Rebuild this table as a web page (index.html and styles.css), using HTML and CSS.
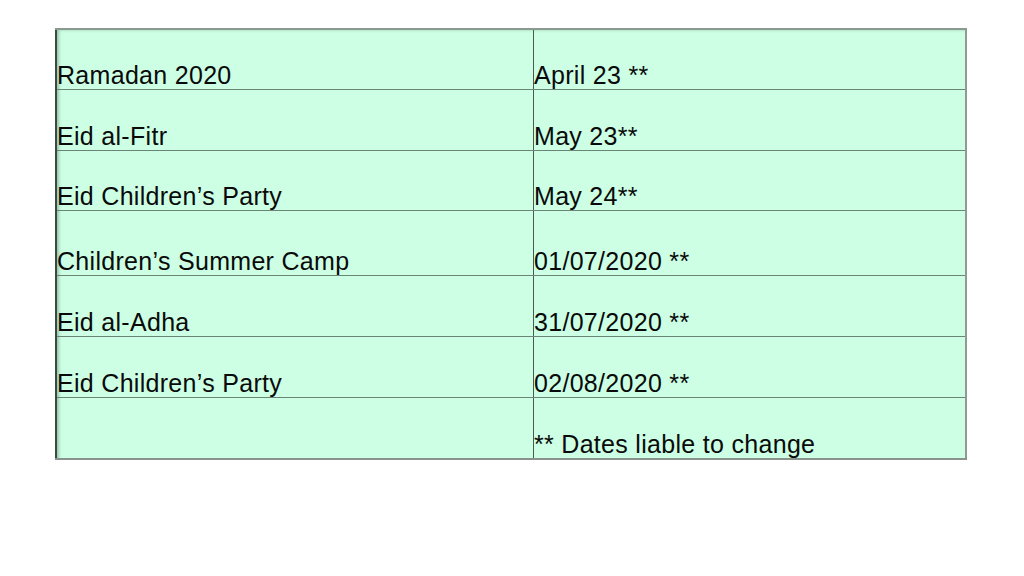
FILE: index.html
```html
<!DOCTYPE html>
<html>
<head>
<meta charset="utf-8">
<link rel="stylesheet" href="styles.css">
</head>
<body>
<div class="slide">
  <table class="events">
    <tr class="r60"><td class="c1">Ramadan 2020</td><td>April 23 **</td></tr>
    <tr class="r61"><td class="c1">Eid al-Fitr</td><td>May 23**</td></tr>
    <tr class="r60"><td class="c1">Eid Children’s Party</td><td>May 24**</td></tr>
    <tr class="r65"><td class="c1">Children’s Summer Camp</td><td>01/07/2020 **</td></tr>
    <tr class="r61"><td class="c1">Eid al-Adha</td><td>31/07/2020 **</td></tr>
    <tr class="r61"><td class="c1">Eid Children’s Party</td><td>02/08/2020 **</td></tr>
    <tr class="r61"><td class="c1"></td><td>** Dates liable to change</td></tr>
  </table>
</div>
</body>
</html>
```
FILE: styles.css
```css
html, body {
  margin: 0;
  padding: 0;
  background: #ffffff;
}
.slide {
  width: 1024px;
  height: 576px;
  padding: 28px 0 0 55px;
  box-sizing: border-box;
}
.events {
  border-collapse: collapse;
  width: 912px;
  background: #ccffe4;
  font-family: "Liberation Sans", Arial, sans-serif;
  font-size: 25px;
  letter-spacing: 0.3px;
  color: #0a0a0a;
  border-top: 2px solid #8a9a90;
  border-right: 2px solid #8f9a94;
  border-bottom: 2px solid #8a928e;
  border-left: 2px solid #3a4a40;
  box-shadow: inset 4px 2px 3px -2px rgba(60,90,70,0.35);
}
.events td {
  vertical-align: bottom;
  padding: 0 0 1px 0;
  line-height: 25px;
  border-top: 1px solid #6a8576;
  border-bottom: 1px solid #6a8576;
  white-space: nowrap;
}
.events td.c1 {
  width: 476px;
  border-right: 1px solid #4a5a50;
}
.r60 td { height: 58px; }
.r61 td { height: 59px; }
.r65 td { height: 63px; }
```
